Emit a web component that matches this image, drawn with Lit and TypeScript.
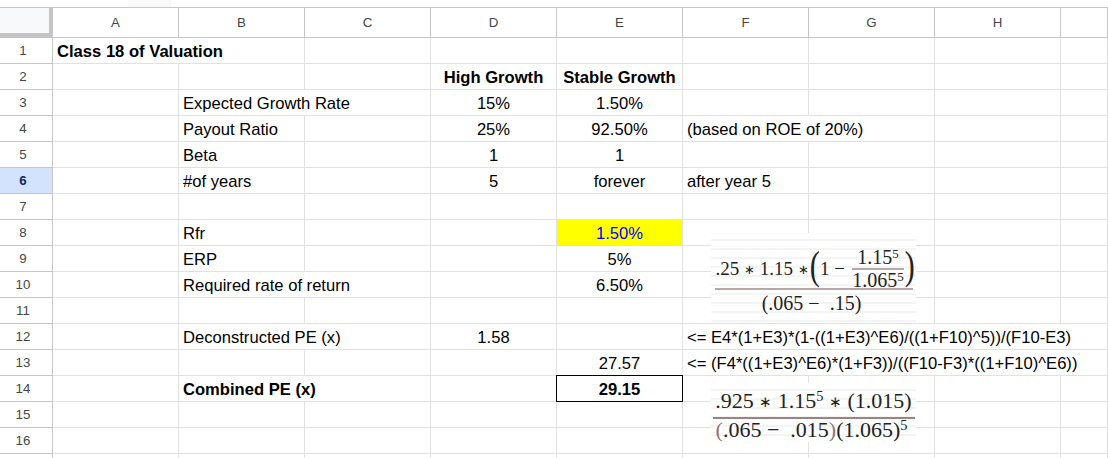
import { css, html, LitElement } from "lit";
import { customElement } from "lit/decorators.js";

type Cell = { col: number; text: string; span?: number; cls?: string };

const COLS = ["A", "B", "C", "D", "E", "F", "G", "H", ""];

// row number -> cells, col is an index into COLS
const ROWS: Record<number, Cell[]> = {
    1: [{ col: 0, span: 2, text: "Class 18 of Valuation", cls: "bold" }],
    2: [
        { col: 3, text: "High Growth", cls: "bold center" },
        { col: 4, text: "Stable Growth", cls: "bold center" },
    ],
    3: [
        { col: 1, span: 2, text: "Expected Growth Rate" },
        { col: 3, text: "15%", cls: "center" },
        { col: 4, text: "1.50%", cls: "center" },
    ],
    4: [
        { col: 1, text: "Payout Ratio" },
        { col: 3, text: "25%", cls: "center" },
        { col: 4, text: "92.50%", cls: "center" },
        { col: 5, span: 2, text: "(based on ROE of 20%)" },
    ],
    5: [
        { col: 1, text: "Beta" },
        { col: 3, text: "1", cls: "center" },
        { col: 4, text: "1", cls: "center" },
    ],
    6: [
        { col: 1, text: "#of years" },
        { col: 3, text: "5", cls: "center" },
        { col: 4, text: "forever", cls: "center" },
        { col: 5, text: "after year 5" },
    ],
    8: [
        { col: 1, text: "Rfr" },
        { col: 4, text: "1.50%", cls: "center input" },
    ],
    9: [
        { col: 1, text: "ERP" },
        { col: 4, text: "5%", cls: "center" },
    ],
    10: [
        { col: 1, span: 2, text: "Required rate of return" },
        { col: 4, text: "6.50%", cls: "center" },
    ],
    12: [
        { col: 1, span: 2, text: "Deconstructed PE (x)" },
        { col: 3, text: "1.58", cls: "center" },
        { col: 5, span: 4, text: "<= E4*(1+E3)*(1-((1+E3)^E6)/((1+F10)^5))/(F10-E3)" },
    ],
    13: [
        { col: 4, text: "27.57", cls: "center" },
        { col: 5, span: 4, text: "<= (F4*((1+E3)^E6)*(1+F3))/((F10-F3)*((1+F10)^E6))" },
    ],
    14: [
        { col: 1, span: 2, text: "Combined PE (x)", cls: "bold" },
        { col: 4, text: "29.15", cls: "center bold boxed" },
    ],
};

@customElement("app-root")
export class AppRoot extends LitElement {
    renderRow(row: number) {
        const cells = ROWS[row] ?? [];
        const out = [];
        for (let col = 0; col < COLS.length; col++) {
            const cell = cells.find((c) => c.col === col);
            if (cell) {
                const span = cell.span ?? 1;
                out.push(html`<div class="cell ${cell.cls ?? ""}" style="grid-column: span ${span}">${cell.text}</div>`);
                col += span - 1;
            } else {
                out.push(html`<div class="cell"></div>`);
            }
        }
        return out;
    }

    render() {
        const rows = Array.from({ length: 17 }, (_, i) => i + 1);
        const star = html`<span class="op">∗</span>`;
        return html`
            <div class="tab"></div>
            <div class="sheet">
                <div class="corner"></div>
                ${COLS.map((c) => html`<div class="col-head">${c}</div>`)}
                ${rows.map(
                    (r) => html`
                        <div class="row-head ${r === 6 ? "active" : ""}">${r < 17 ? r : ""}</div>
                        ${this.renderRow(r)}
                    `
                )}

                <div class="picture first">
                    <div class="top-line">
                        <span>.25 ${star} 1.15 ${star}</span>
                        <span class="paren">(</span>
                        <span class="one-minus">1 −</span>
                        <span class="inner">
                            <span class="inner-top">1.15<sup>5</sup></span>
                            <span>1.065<sup>5</sup></span>
                        </span>
                        <span class="paren">)</span>
                    </div>
                    <div class="bottom-line">(.065 −  .15)</div>
                </div>

                <div class="picture second">
                    <div class="top-line">.925 ${star} 1.15<sup>5</sup> ${star} (1.015)</div>
                    <div class="bottom-line"><span class="tint">(</span>.065 −  .015<span class="tint">)</span>(1.065)<sup>5</sup></div>
                </div>
            </div>
        `;
    }

    static styles = css`
        :host {
            display: block;
            position: relative;
            height: 458px;
            overflow: hidden;
            background: #fff;
            font-family: "Liberation Sans", Arial, sans-serif;
            font-size: 16.6px;
            color: #000;
        }

        .tab {
            position: absolute;
            left: 128px;
            top: 0;
            width: 43px;
            height: 7px;
            background: #f9f9f9;
        }

        .sheet {
            position: relative;
            margin-top: 7px;
            border-top: 1px solid #c4c7c5;
            display: grid;
            grid-template-columns: 53px repeat(8, 126px) 1fr;
            grid-template-rows: 30px repeat(17, 26px);
        }

        .corner {
            background: #f8f9fa;
            border-right: 4px solid #c4c4c4;
            border-bottom: 5px solid #c4c4c4;
        }

        .col-head {
            display: flex;
            align-items: center;
            justify-content: center;
            border-right: 1px solid #c4c7c5;
            border-bottom: 1px solid #c4c7c5;
            font-size: 13.3px;
            color: #444746;
        }

        .row-head {
            display: flex;
            align-items: center;
            justify-content: center;
            padding-right: 6px;
            border-right: 1px solid #c4c7c5;
            border-bottom: 1px solid #c4c7c5;
            font-size: 13.3px;
            color: #444746;
        }

        .row-head.active {
            background: #d3e3fd;
            color: #0b2a5c;
            font-weight: bold;
        }

        .cell {
            display: flex;
            align-items: center;
            padding: 2px 4px 0;
            min-width: 0;
            white-space: nowrap;
            border-right: 1px solid #e1e1e1;
            border-bottom: 1px solid #e1e1e1;
        }

        .bold {
            font-weight: bold;
        }

        .center {
            justify-content: center;
        }

        .input {
            background: #ffff00;
            color: #0000ff;
        }

        .boxed {
            border-right-color: #000;
            border-bottom-color: #000;
            box-shadow: -1px 0 #000, 0 -1px #000, -1px -1px #000;
        }

        .picture {
            position: absolute;
            left: 711px;
            width: 205px;
            display: flex;
            flex-direction: column;
            align-items: center;
            font-family: "Liberation Serif", "Times New Roman", serif;
            color: #222;
            background: repeating-linear-gradient(#fff 0 6px, #f4f4f4 6px 8px, #fff 8px 9px);
        }

        .picture.first {
            top: 225px;
            height: 90px;
            font-size: 19px;
        }

        .picture.second {
            top: 375px;
            height: 59px;
            font-size: 22px;
        }

        .picture sup {
            font-size: 0.65em;
            line-height: 0;
            vertical-align: 0.5em;
        }

        .op {
            font-size: 0.7em;
            vertical-align: 0.05em;
        }

        .top-line {
            display: flex;
            align-items: center;
            gap: 3px;
            white-space: pre;
            width: 198px;
            box-sizing: border-box;
        }

        .first .top-line {
            height: 57px;
            padding: 16px 0 0 1px;
            border-bottom: 2px solid #b5a8a8;
        }

        .second .top-line {
            display: block;
            text-align: center;
            height: 36px;
            line-height: 35px;
            border-bottom: 2px solid #9c8380;
            width: 202px;
        }

        .bottom-line {
            white-space: pre;
        }

        .first .bottom-line {
            font-size: 20px;
            line-height: 27px;
            margin-right: 4px;
        }

        .second .bottom-line {
            line-height: 21px;
            margin-right: 4px;
        }

        .tint {
            color: #8c7472;
        }

        .paren {
            font-size: 40px;
            line-height: 40px;
            font-weight: normal;
            transform: scaleX(0.75);
            margin: -6px -4px 0;
        }

        .one-minus {
            margin-right: 4px;
        }

        .inner {
            display: flex;
            flex-direction: column;
            align-items: center;
            font-size: 20px;
            line-height: 21px;
            width: 53px;
        }

        .inner-top {
            width: 100%;
            text-align: center;
            border-bottom: 2px solid #b5a8a8;
        }
    `;
}
